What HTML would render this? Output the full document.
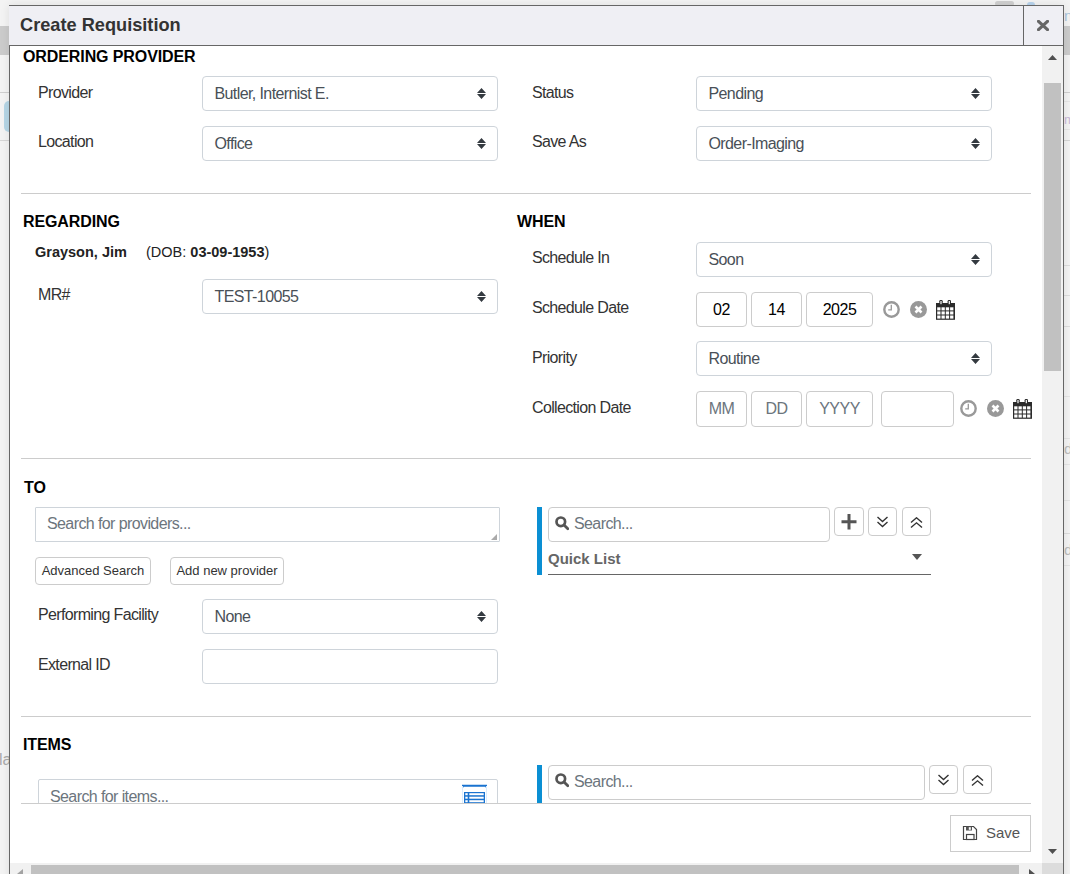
<!DOCTYPE html>
<html><head><meta charset="utf-8">
<style>
*{box-sizing:border-box;margin:0;padding:0}
html,body{width:1070px;height:874px;overflow:hidden;background:#f4f4f4;font-family:"Liberation Sans",sans-serif}
.a{position:absolute}
.t{position:absolute;white-space:nowrap;line-height:1}
.lbl{font-size:16px;letter-spacing:-0.65px;color:#333}
.h{font-size:16px;font-weight:bold;letter-spacing:-0.1px;color:#000}
.sel{position:absolute;height:35px;border:1px solid #ced4da;border-radius:4px;background:#fff}
.sel span{position:absolute;left:11.5px;top:9px;font-size:16px;letter-spacing:-0.6px;line-height:1;color:#495057;white-space:nowrap}
.sel svg{position:absolute;right:11px;top:11px}
.box{position:absolute;height:35px;border:1px solid #ccc;border-radius:4px;background:#fff;text-align:center;font-size:16px;letter-spacing:-0.5px;line-height:33px;color:#000}
.hr{position:absolute;left:21px;width:1010px;height:1px;background:#ccc}
.ph{color:#6c757d}
.sm{font-size:13px;color:#333;text-align:center;line-height:26px;border-radius:2px}
.btn{position:absolute;border:1px solid #ccc;border-radius:4px;background:#fff}
</style></head><body>
<!-- background page -->
<div class="a" style="left:0;top:0;width:1070px;height:874px;background:#f3f3f3"></div>
<div class="a" style="left:0;top:26px;width:1070px;height:29px;background:#cbcbcb"></div>
<div class="a" style="left:0;top:92px;width:1070px;height:1px;background:#cfcfcf"></div>
<div class="a" style="left:0;top:140px;width:1070px;height:1px;background:#d6d6d6"></div>
<div class="a" style="left:4px;top:101px;width:12px;height:31px;background:#b6d6e6;border-radius:5px"></div>
<div class="a" style="left:995px;top:1px;width:19px;height:5px;background:#d0d0d0;border-radius:3px"></div>
<div class="a" style="left:1027px;top:2px;width:8px;height:6px;background:#b8d4ee;border-radius:4px"></div>
<div class="a" style="left:1064px;top:101px;width:6px;height:1px;background:#e6e6e6"></div>
<div class="a" style="left:1064px;top:129px;width:6px;height:1px;background:#e6e6e6"></div>
<div class="a" style="left:1064px;top:265px;width:6px;height:1px;background:#dcdcdc"></div>
<div class="a" style="left:1064px;top:295px;width:6px;height:1px;background:#dcdcdc"></div>
<div class="a" style="left:1064px;top:326px;width:6px;height:1px;background:#dcdcdc"></div>
<div class="a" style="left:1064px;top:396px;width:6px;height:1px;background:#e4e4e4"></div>
<div class="a" style="left:1064px;top:438px;width:6px;height:1px;background:#e4e4e4"></div>
<div class="a" style="left:1064px;top:464px;width:6px;height:1px;background:#e4e4e4"></div>
<div class="a" style="left:1064px;top:500px;width:6px;height:1px;background:#e4e4e4"></div>
<div class="a" style="left:1064px;top:533px;width:6px;height:1px;background:#dcdcdc"></div>
<div class="a" style="left:1064px;top:565px;width:6px;height:1px;background:#e4e4e4"></div>
<div class="t" style="left:1064px;top:8px;font-size:15px;color:#a9c4dc">n</div>
<div class="t" style="left:1064px;top:113px;font-size:13px;color:#c8b8d8">m</div>
<div class="t" style="left:1064px;top:441px;font-size:15px;color:#bbb">d</div>
<div class="t" style="left:1064px;top:542px;font-size:15px;color:#bbb">d</div>
<div class="t" style="left:-1px;top:752px;font-size:16px;color:#aaa">la</div>


<!-- modal -->
<div class="a" style="left:9px;top:5px;width:1055px;height:880px;border:1px solid #666;background:#fff;box-shadow:0 0 9px rgba(0,0,0,0.09)"></div>
<div class="a" style="left:9px;top:6px;width:1054px;height:39px;background:#efeff4"></div>
<div class="a" style="left:10px;top:45px;width:1053px;height:1px;background:#666"></div>
<div class="a" style="left:1023px;top:6px;width:1px;height:39px;background:#666"></div>
<svg class="a" style="left:1037px;top:20px" width="12" height="11" viewBox="0 0 12 11"><path d="M1.5 1.3L10.5 9.7M10.5 1.3L1.5 9.7" stroke="#666" stroke-width="3.2" stroke-linecap="round"/></svg>
<div class="t" style="left:20px;top:16px;font-size:18.2px;font-weight:bold;color:#333">Create Requisition</div>

<!-- ORDERING PROVIDER -->
<div class="t h" style="left:23px;top:49px">ORDERING PROVIDER</div>
<div class="t lbl" style="left:38px;top:85px">Provider</div>
<div class="sel" style="left:202px;top:76px;width:296px"><span>Butler, Internist E.</span><svg width="9" height="12" viewBox="0 0 9 12"><path d="M4.5 0L9 5H0z M0 6h9L4.5 11z" fill="#343a40"/></svg></div>
<div class="t lbl" style="left:38px;top:134px">Location</div>
<div class="sel" style="left:202px;top:126px;width:296px"><span>Office</span><svg width="9" height="12" viewBox="0 0 9 12"><path d="M4.5 0L9 5H0z M0 6h9L4.5 11z" fill="#343a40"/></svg></div>

<div class="t lbl" style="left:532px;top:85px">Status</div>
<div class="sel" style="left:696px;top:76px;width:296px"><span>Pending</span><svg width="9" height="12" viewBox="0 0 9 12"><path d="M4.5 0L9 5H0z M0 6h9L4.5 11z" fill="#343a40"/></svg></div>
<div class="t lbl" style="left:532px;top:134px">Save As</div>
<div class="sel" style="left:696px;top:126px;width:296px"><span>Order-Imaging</span><svg width="9" height="12" viewBox="0 0 9 12"><path d="M4.5 0L9 5H0z M0 6h9L4.5 11z" fill="#343a40"/></svg></div>

<div class="hr" style="top:193px"></div>

<!-- REGARDING -->
<div class="t h" style="left:23px;top:214px">REGARDING</div>
<div class="t" style="left:35px;top:245px;font-size:14.5px;color:#222"><b>Grayson, Jim</b></div>
<div class="t" style="left:146px;top:245px;font-size:14.5px;color:#222">(DOB: <b>03-09-1953</b>)</div>
<div class="t lbl" style="left:38px;top:287px">MR#</div>
<div class="sel" style="left:202px;top:279px;width:296px"><span>TEST-10055</span><svg width="9" height="12" viewBox="0 0 9 12"><path d="M4.5 0L9 5H0z M0 6h9L4.5 11z" fill="#343a40"/></svg></div>

<!-- WHEN -->
<div class="t h" style="left:517px;top:214px">WHEN</div>
<div class="t lbl" style="left:532px;top:250px">Schedule In</div>
<div class="sel" style="left:696px;top:242px;width:296px"><span>Soon</span><svg width="9" height="12" viewBox="0 0 9 12"><path d="M4.5 0L9 5H0z M0 6h9L4.5 11z" fill="#343a40"/></svg></div>

<div class="t lbl" style="left:532px;top:300px">Schedule Date</div>
<div class="box" style="left:696px;top:292px;width:51px">02</div>
<div class="box" style="left:751px;top:292px;width:51px">14</div>
<div class="box" style="left:806px;top:292px;width:67px">2025</div>
<svg class="a" style="left:883px;top:301px" width="17" height="17" viewBox="0 0 17 17"><circle cx="8.5" cy="8.5" r="7.2" fill="none" stroke="#999" stroke-width="2.4"/><path d="M8.3 3.8V8.8H5.2" fill="none" stroke="#999" stroke-width="1.3"/></svg><svg class="a" style="left:910px;top:301px" width="17" height="17" viewBox="0 0 17 17"><circle cx="8.5" cy="8.5" r="8.5" fill="#999"/><path d="M5.5 5.5L11.5 11.5M11.5 5.5L5.5 11.5" stroke="#fff" stroke-width="2.6"/></svg><svg class="a" style="left:936px;top:300px" width="19" height="20" viewBox="0 0 19 20"><rect x="0" y="3" width="19" height="16.8" fill="#2b2b2b"/><rect x="3.3" y="0" width="3.4" height="5.2" rx="1.3" fill="#2b2b2b"/><rect x="4.4" y="1" width="1.2" height="3.2" fill="#fff"/><rect x="11.6" y="0" width="3.4" height="5.2" rx="1.3" fill="#2b2b2b"/><rect x="12.7" y="1" width="1.2" height="3.2" fill="#fff"/><g fill="#fff"><rect x="1.2" y="7.3" width="3.3" height="3.1"/><rect x="5.5" y="7.3" width="3.3" height="3.1"/><rect x="9.8" y="7.3" width="3.3" height="3.1"/><rect x="14.1" y="7.3" width="3.3" height="3.1"/><rect x="1.2" y="11.4" width="3.3" height="3.1"/><rect x="5.5" y="11.4" width="3.3" height="3.1"/><rect x="9.8" y="11.4" width="3.3" height="3.1"/><rect x="14.1" y="11.4" width="3.3" height="3.1"/><rect x="1.2" y="15.5" width="3.3" height="3.1"/><rect x="5.5" y="15.5" width="3.3" height="3.1"/><rect x="9.8" y="15.5" width="3.3" height="3.1"/><rect x="14.1" y="15.5" width="3.3" height="3.1"/></g></svg>
<div class="t lbl" style="left:532px;top:350px">Priority</div>
<div class="sel" style="left:696px;top:341px;width:296px"><span>Routine</span><svg width="9" height="12" viewBox="0 0 9 12"><path d="M4.5 0L9 5H0z M0 6h9L4.5 11z" fill="#343a40"/></svg></div>

<div class="t lbl" style="left:532px;top:400px">Collection Date</div>
<div class="box ph" style="left:696px;top:391px;height:36px;line-height:34px;width:51px">MM</div>
<div class="box ph" style="left:751px;top:391px;height:36px;line-height:34px;width:51px">DD</div>
<div class="box ph" style="left:806px;top:391px;height:36px;line-height:34px;width:67px">YYYY</div>
<div class="box" style="left:881px;top:391px;height:36px;line-height:34px;width:73px"></div>
<svg class="a" style="left:960px;top:400px" width="17" height="17" viewBox="0 0 17 17"><circle cx="8.5" cy="8.5" r="7.2" fill="none" stroke="#999" stroke-width="2.4"/><path d="M8.3 3.8V8.8H5.2" fill="none" stroke="#999" stroke-width="1.3"/></svg><svg class="a" style="left:987px;top:400px" width="17" height="17" viewBox="0 0 17 17"><circle cx="8.5" cy="8.5" r="8.5" fill="#999"/><path d="M5.5 5.5L11.5 11.5M11.5 5.5L5.5 11.5" stroke="#fff" stroke-width="2.6"/></svg><svg class="a" style="left:1013px;top:399px" width="19" height="20" viewBox="0 0 19 20"><rect x="0" y="3" width="19" height="16.8" fill="#2b2b2b"/><rect x="3.3" y="0" width="3.4" height="5.2" rx="1.3" fill="#2b2b2b"/><rect x="4.4" y="1" width="1.2" height="3.2" fill="#fff"/><rect x="11.6" y="0" width="3.4" height="5.2" rx="1.3" fill="#2b2b2b"/><rect x="12.7" y="1" width="1.2" height="3.2" fill="#fff"/><g fill="#fff"><rect x="1.2" y="7.3" width="3.3" height="3.1"/><rect x="5.5" y="7.3" width="3.3" height="3.1"/><rect x="9.8" y="7.3" width="3.3" height="3.1"/><rect x="14.1" y="7.3" width="3.3" height="3.1"/><rect x="1.2" y="11.4" width="3.3" height="3.1"/><rect x="5.5" y="11.4" width="3.3" height="3.1"/><rect x="9.8" y="11.4" width="3.3" height="3.1"/><rect x="14.1" y="11.4" width="3.3" height="3.1"/><rect x="1.2" y="15.5" width="3.3" height="3.1"/><rect x="5.5" y="15.5" width="3.3" height="3.1"/><rect x="9.8" y="15.5" width="3.3" height="3.1"/><rect x="14.1" y="15.5" width="3.3" height="3.1"/></g></svg>
<div class="hr" style="top:458px"></div>

<!-- TO -->
<div class="t h" style="left:24px;top:480px">TO</div>
<div class="a" style="left:35px;top:507px;width:465px;height:35px;border:1px solid #ced4da;border-radius:1px"></div>
<div class="t" style="left:47px;top:516px;font-size:16px;letter-spacing:-0.6px;color:#6c757d">Search for providers...</div>
<svg class="a" style="left:491px;top:534px" width="6" height="6" viewBox="0 0 6 6"><path d="M6 0V6H0z" fill="#aaa"/></svg>
<div class="btn sm" style="left:35px;top:557px;width:116px;height:28px">Advanced Search</div>
<div class="btn sm" style="left:170px;top:557px;width:114px;height:28px">Add new provider</div>
<div class="t lbl" style="left:38px;top:607px">Performing Facility</div>
<div class="sel" style="left:202px;top:599px;width:296px"><span>None</span><svg width="9" height="12" viewBox="0 0 9 12"><path d="M4.5 0L9 5H0z M0 6h9L4.5 11z" fill="#343a40"/></svg></div>

<div class="t lbl" style="left:38px;top:657px">External ID</div>
<div class="a" style="left:202px;top:649px;width:296px;height:35px;border:1px solid #ced4da;border-radius:4px"></div>

<div class="a" style="left:537px;top:507px;width:5px;height:68px;background:#0b8fd3"></div>
<div class="a" style="left:548px;top:507px;width:282px;height:35px;border:1px solid #ccc;border-radius:4px"></div>
<svg class="a" style="left:555px;top:516px" width="14" height="15" viewBox="0 0 14 15"><circle cx="5.8" cy="5.8" r="4.3" fill="none" stroke="#555" stroke-width="2.7"/><path d="M9 9l3.8 3.8" stroke="#555" stroke-width="2.8" stroke-linecap="round"/></svg>
<div class="t" style="left:574px;top:516px;font-size:16px;letter-spacing:-0.6px;color:#6c757d">Search...</div>
<div class="btn" style="left:834px;top:507px;width:30px;height:29px"></div>
<svg class="a" style="left:841px;top:514px" width="16" height="16" viewBox="0 0 16 16"><path d="M8 0V15.5M0.5 7.8H15.5" stroke="#555" stroke-width="3"/></svg>
<div class="btn" style="left:868px;top:507px;width:29px;height:29px"></div>
<svg class="a" style="left:876px;top:516px" width="13" height="12" viewBox="0 0 13 12"><path d="M1.5 1l5 4.5 5-4.5M1.5 6l5 4.5 5-4.5" fill="none" stroke="#333" stroke-width="1.4"/></svg>
<div class="btn" style="left:902px;top:507px;width:29px;height:29px"></div>
<svg class="a" style="left:910px;top:517px" width="13" height="12" viewBox="0 0 13 12"><path d="M1 5.5l5.5-4.7 5.5 4.7M1 10.5l5.5-4.7 5.5 4.7" fill="none" stroke="#333" stroke-width="1.4"/></svg>
<div class="t" style="left:548px;top:551px;font-size:15px;font-weight:bold;color:#666">Quick List</div>
<svg class="a" style="left:911.5px;top:553.5px" width="10" height="6" viewBox="0 0 10 6"><path d="M0 0H10L5 6z" fill="#555"/></svg>
<div class="a" style="left:548px;top:574px;width:383px;height:1px;background:#666"></div>

<div class="hr" style="top:716px"></div>

<!-- ITEMS (clipped) -->
<div class="a" style="left:10px;top:720px;width:1032px;height:83px;overflow:hidden">
 <div class="t h" style="left:13px;top:17px">ITEMS</div>
 <div class="a" style="left:28px;top:59px;width:460px;height:35px;border:1px solid #ced4da;border-radius:2px"></div>
 <div class="t" style="left:40px;top:69px;font-size:16px;letter-spacing:-0.6px;color:#6c757d">Search for items...</div>
 <svg class="a" style="left:452px;top:64px" width="25" height="20" viewBox="0 0 25 20"><path d="M0.5 3.5V1.8H24.5V3.5" fill="none" stroke="#1a73d0" stroke-width="2"/><path d="M0.5 2V20M24.5 2V20" stroke="#d8ecff" stroke-width="1"/><rect x="2" y="8" width="21" height="12" fill="#1a73d0"/><g fill="#fff"><rect x="3.3" y="9.2" width="2.4" height="2"/><rect x="7.3" y="9.2" width="14.4" height="2"/><rect x="3.3" y="12.7" width="2.4" height="2"/><rect x="7.3" y="12.7" width="14.4" height="2"/><rect x="3.3" y="16.2" width="2.4" height="2"/><rect x="7.3" y="16.2" width="14.4" height="2"/></g></svg>
 <div class="a" style="left:527px;top:45px;width:5px;height:60px;background:#0b8fd3"></div>
 <div class="a" style="left:538px;top:45px;width:377px;height:35px;border:1px solid #ccc;border-radius:4px"></div>
 <svg class="a" style="left:545px;top:53px" width="14" height="15" viewBox="0 0 14 15"><circle cx="5.8" cy="5.8" r="4.3" fill="none" stroke="#555" stroke-width="2.7"/><path d="M9 9l3.8 3.8" stroke="#555" stroke-width="2.8" stroke-linecap="round"/></svg>
 <div class="t" style="left:564px;top:54px;font-size:16px;letter-spacing:-0.6px;color:#6c757d">Search...</div>
 <div class="btn" style="left:919px;top:45px;width:29px;height:29px"></div>
 <svg class="a" style="left:927px;top:54px" width="13" height="12" viewBox="0 0 13 12"><path d="M1.5 1l5 4.5 5-4.5M1.5 6l5 4.5 5-4.5" fill="none" stroke="#333" stroke-width="1.4"/></svg>
 <div class="btn" style="left:953px;top:45px;width:29px;height:29px"></div>
 <svg class="a" style="left:961px;top:55px" width="13" height="12" viewBox="0 0 13 12"><path d="M1 5.5l5.5-4.7 5.5 4.7M1 10.5l5.5-4.7 5.5 4.7" fill="none" stroke="#333" stroke-width="1.4"/></svg>
</div>
<div class="hr" style="top:803px"></div>

<!-- footer -->
<div class="a" style="left:950px;top:815px;width:81px;height:37px;border:1px solid #ccc;background:#fff"></div>
<svg class="a" style="left:962px;top:825px" width="16" height="16" viewBox="0 0 16 16"><path d="M1.5 1.5H11.5L14.5 4.5V14.5H1.5Z" fill="none" stroke="#444" stroke-width="1.2"/><rect x="4" y="1.5" width="6" height="4" fill="#555"/><rect x="6.8" y="2.2" width="2" height="2.6" fill="#fff"/><rect x="4.5" y="9.5" width="7.5" height="5" fill="none" stroke="#444" stroke-width="1.2"/></svg>
<div class="t" style="left:986px;top:825px;font-size:15px;color:#555">Save</div>

<!-- scrollbars -->
<div class="a" style="left:1042px;top:46px;width:21px;height:817px;background:#f1f1f1"></div>
<div class="a" style="left:1044px;top:83px;width:17px;height:288px;background:#c1c1c1"></div>
<svg class="a" style="left:1048px;top:55px" width="9" height="5" viewBox="0 0 9 5"><path d="M4.5 0L9 5H0z" fill="#505050"/></svg>
<svg class="a" style="left:1048px;top:849px" width="9" height="5" viewBox="0 0 9 5"><path d="M0 0H9L4.5 5z" fill="#505050"/></svg>
<div class="a" style="left:10px;top:863px;width:1032px;height:11px;background:#f1f1f1"></div>
<div class="a" style="left:1042px;top:863px;width:21px;height:11px;background:#dcdcdc"></div>
<div class="a" style="left:31px;top:865px;width:988px;height:9px;background:#c1c1c1"></div>
<svg class="a" style="left:17px;top:869px" width="6" height="5" viewBox="0 0 6 5"><path d="M6 0V5H0z" fill="#a3a3a3"/></svg>
<svg class="a" style="left:1029px;top:869px" width="6" height="5" viewBox="0 0 6 5"><path d="M0 0V5H6z" fill="#505050"/></svg>

</body></html>
